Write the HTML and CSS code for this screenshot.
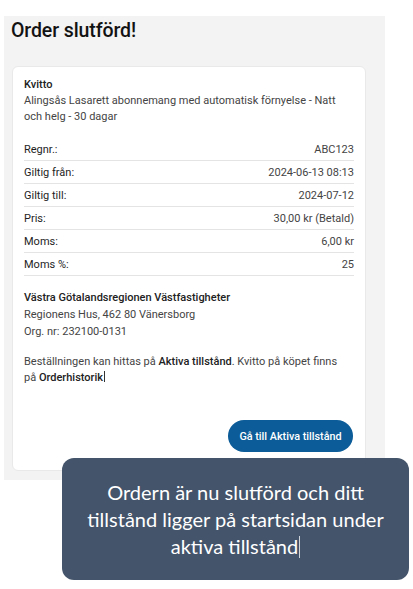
FILE: index.html
```html
<!DOCTYPE html>
<html lang="sv">
<head>
<meta charset="utf-8">
<title>Order slutförd</title>
<link rel="stylesheet" href="styles.css">
</head>
<body>
<div class="panel">
  <h1 class="title">Order slutförd!</h1>
  <div class="card">
    <div class="receipt-head">
      <div class="receipt-title">Kvitto</div>
      <div class="receipt-desc">Alingsås Lasarett abonnemang med automatisk förnyelse - Natt och helg - 30 dagar</div>
    </div>
    <div class="rows">
      <div class="row"><span class="label">Regnr.:</span><span class="value">ABC123</span></div>
      <div class="row"><span class="label">Giltig från:</span><span class="value">2024-06-13 08:13</span></div>
      <div class="row"><span class="label">Giltig till:</span><span class="value">2024-07-12</span></div>
      <div class="row"><span class="label">Pris:</span><span class="value">30,00 kr (Betald)</span></div>
      <div class="row"><span class="label">Moms:</span><span class="value">6,00 kr</span></div>
      <div class="row"><span class="label">Moms %:</span><span class="value">25</span></div>
    </div>
    <div class="company">
      <div class="company-name">Västra Götalandsregionen Västfastigheter</div>
      <div>Regionens Hus, 462 80 Vänersborg</div>
      <div>Org. nr: 232100-0131</div>
    </div>
    <p class="info">Beställningen kan hittas på <strong>Aktiva tillstånd</strong>. Kvitto på köpet finns på <strong>Orderhistorik</strong><span class="caret"></span></p>
    <div class="actions">
      <button class="btn">Gå till Aktiva tillstånd</button>
    </div>
  </div>
</div>
<div class="callout">Ordern är nu slutförd och ditt tillstånd ligger på startsidan under aktiva tillstånd<span class="caret caret-lg"></span></div>
</body>
</html>
```
FILE: styles.css
```css
html, body {
  margin: 0;
  padding: 0;
  background: #ffffff;
}
body {
  width: 413px;
  height: 589px;
  position: relative;
  font-family: Roboto, "Liberation Sans", sans-serif;
  overflow: hidden;
}
.panel {
  margin: 16px 0 0 4px;
  width: 381px;
  height: 464px;
  background: #f3f3f3;
  box-sizing: border-box;
  padding: 1px 0 0 0;
}
.title {
  margin: 0;
  padding: 2px 0 0 7px;
  font-size: 19.5px;
  font-weight: 500;
  color: #121212;
  line-height: 24px;
  letter-spacing: -0.1px;
}
.card {
  margin: 23px 19px 0 8px;
  background: #ffffff;
  border: 1px solid #e9e9e9;
  border-radius: 6px;
  height: 405px;
  box-sizing: border-box;
  padding: 10px 11px 0 11px;
  display: flex;
  flex-direction: column;
}
.receipt-title {
  font-size: 11px;
  font-weight: 500;
  color: #222;
  line-height: 15px;
}
.receipt-desc {
  font-size: 11px;
  color: #444;
  line-height: 16px;
  margin-top: 1px;
}
.rows {
  margin-top: 13px;
}
.row {
  display: flex;
  justify-content: space-between;
  align-items: center;
  height: 23px;
  border-bottom: 1px solid #e4e4e4;
  font-size: 11px;
  box-sizing: border-box;
}
.label {
  color: #1e1e1e;
}
.value {
  color: #444;
}
.company {
  margin-top: 13px;
  font-size: 11px;
  color: #444;
  line-height: 17px;
}
.company-name {
  color: #222;
  font-weight: 500;
}
.info {
  margin: 14px 0 0 0;
  padding-right: 14px;
  font-size: 11px;
  color: #444;
  line-height: 16px;
}
.info strong {
  color: #222;
  font-weight: 500;
}
.caret {
  display: inline-block;
  width: 1px;
  height: 11px;
  background: #333;
  vertical-align: -1px;
  margin-left: 1px;
}
.actions {
  display: flex;
  justify-content: flex-end;
  margin-top: 34px;
  padding-right: 1px;
}
.btn {
  background: #0b5c98;
  color: #ffffff;
  border: none;
  border-radius: 16px;
  height: 32px;
  width: 125px;
  font-family: Roboto, "Liberation Sans", sans-serif;
  font-size: 10.8px;
  font-weight: 500;
  padding: 0;
}
.callout {
  position: absolute;
  left: 62px;
  top: 458px;
  width: 347px;
  height: 122px;
  box-sizing: border-box;
  padding: 21px 12px 0 12px;
  background: #44546a;
  border-radius: 12px;
  color: #ffffff;
  font-family: Lato, "Open Sans", sans-serif;
  font-size: 20px;
  line-height: 27px;
  text-align: center;
}
.caret-lg {
  height: 22px;
  background: #cfd4db;
  vertical-align: -4px;
}
```
